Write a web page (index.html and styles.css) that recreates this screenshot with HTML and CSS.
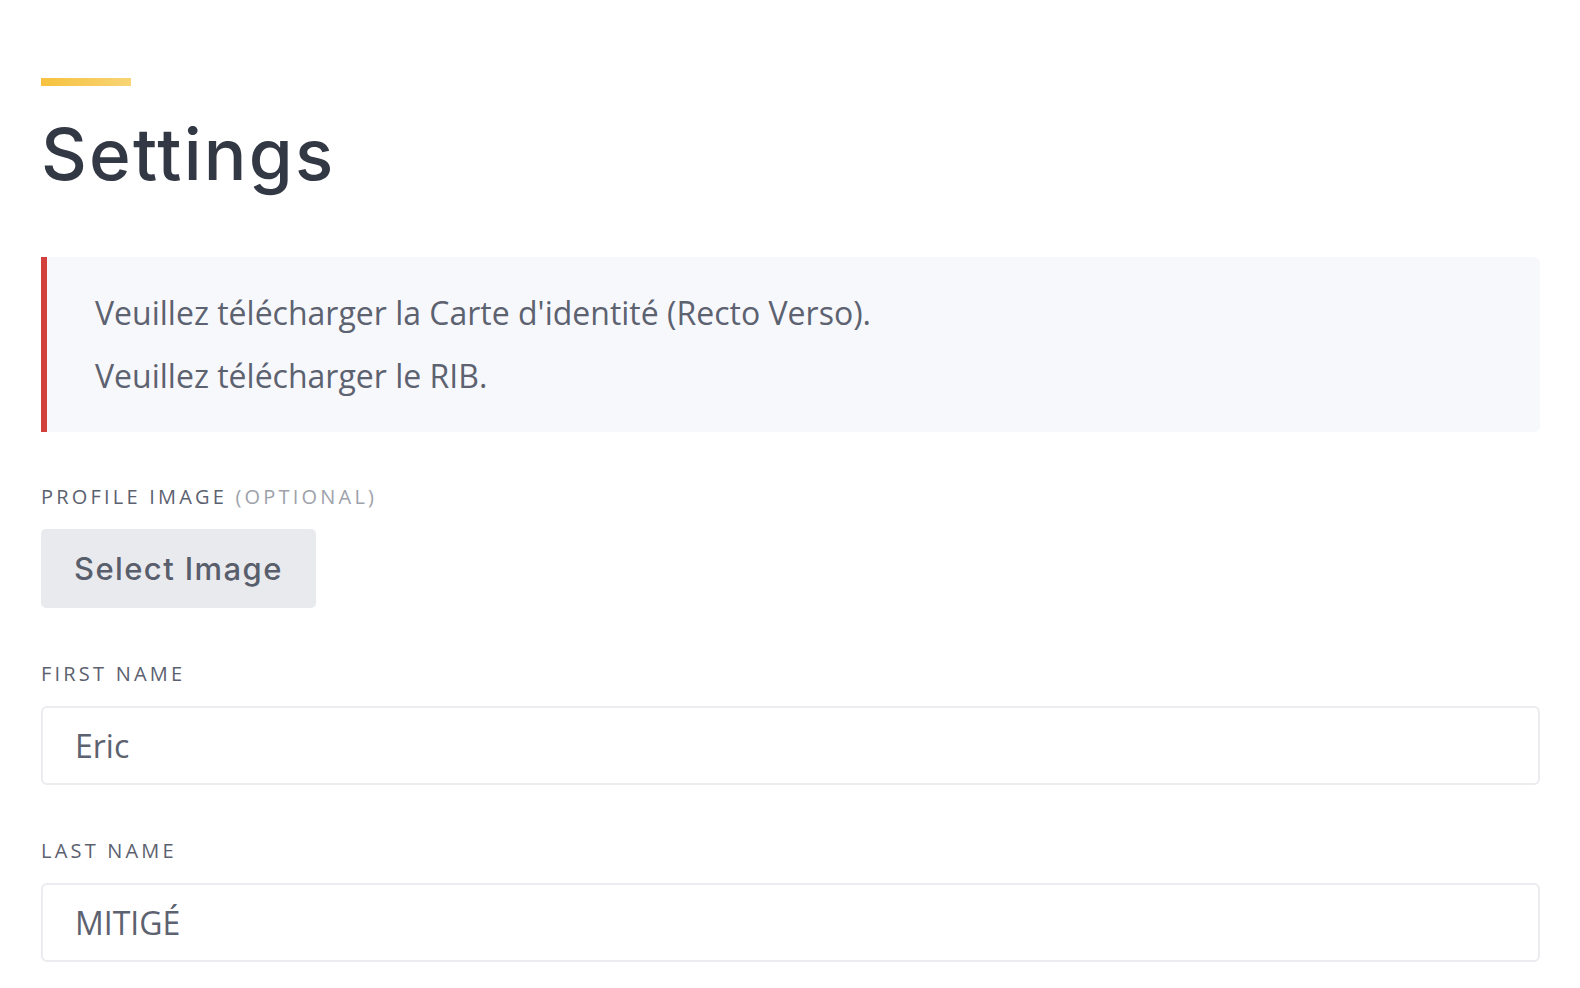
FILE: index.html
```html
<!DOCTYPE html>
<html lang="en">
<head>
    <meta charset="UTF-8">
    <meta name="viewport" content="width=device-width, initial-scale=1.0">
    <title>Settings</title>
    <link rel="stylesheet" href="styles.css">
</head>
<body>

    <div class="container">
        <div class="title-bar"></div>
        <h1>Settings</h1>

        <div class="alert">
            <p>Veuillez télécharger la Carte d'identité (Recto Verso).</p>
            <p>Veuillez télécharger le RIB.</p>
        </div>

        <form class="settings-form">
            <div class="field">
                <label>Profile Image <span class="optional">(Optional)</span></label>
                <button type="button" class="select-btn">Select Image</button>
            </div>
            <div class="field">
                <label for="firstName">First Name</label>
                <input type="text" id="firstName" value="Eric">
            </div>
            <div class="field">
                <label for="lastName">Last Name</label>
                <input type="text" id="lastName" value="MITIGÉ">
            </div>
        </form>
    </div>

</body>
</html>
```

FILE: styles.css
```css
body {
    font-family: "Open Sans", Arial, sans-serif;
    margin: 0;
    padding: 0;
    background-color: #ffffff;
    color: #5d6270;
}
.container {
    padding: 78px 40px 0 41px;
}
.title-bar {
    width: 90px;
    height: 8px;
    background: linear-gradient(to right, #f6c23f, #f8d475);
}
h1 {
    font-family: Inter, "Open Sans", sans-serif;
    font-size: 71px;
    font-weight: 500;
    line-height: 84px;
    letter-spacing: 2.2px;
    color: #333845;
    margin: 26px 0 61px 0;
}
.alert {
    background: #f7f8fc;
    border-left: 6px solid #d1403b;
    border-radius: 0 6px 6px 0;
    padding: 32px 48px;
    margin-bottom: 51px;
}
.alert p {
    font-size: 32px;
    line-height: 48px;
    margin: 0;
}
.alert p + p {
    margin-top: 15px;
}
.field {
    margin-bottom: 52px;
}
label {
    display: block;
    font-size: 20px;
    line-height: 28px;
    text-transform: uppercase;
    letter-spacing: 3.2px;
    color: #5c6170;
    margin-bottom: 18px;
}
.optional {
    color: #9ea2ab;
}
.select-btn {
    height: 79px;
    padding: 0 33px;
    background: #e9eaee;
    color: #595e6c;
    border: none;
    border-radius: 5px;
    font-family: Inter, "Open Sans", sans-serif;
    font-size: 31px;
    font-weight: 500;
    letter-spacing: 1.4px;
    cursor: pointer;
}
input {
    display: block;
    box-sizing: border-box;
    width: 100%;
    height: 79px;
    padding: 0 32px;
    border: 2px solid #ebebf0;
    border-radius: 6px;
    font-family: "Open Sans", Arial, sans-serif;
    font-size: 32px;
    color: #5d6270;
    background: #ffffff;
    outline: none;
}
```
